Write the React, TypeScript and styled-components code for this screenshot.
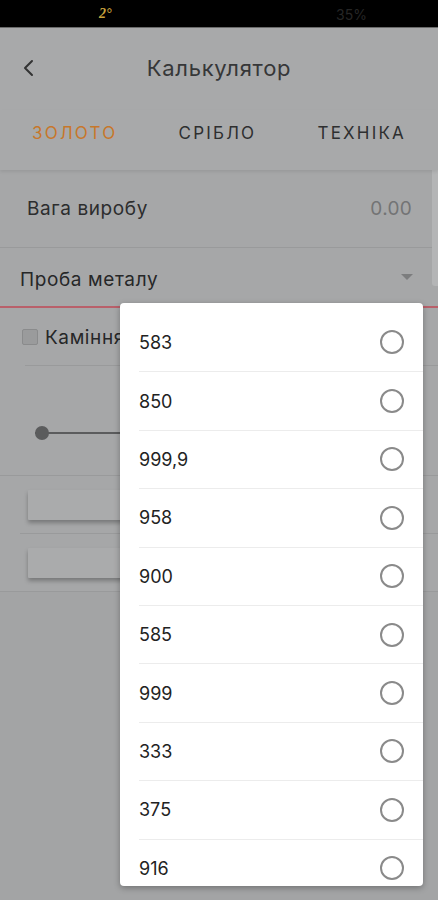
import styled, { createGlobalStyle } from 'styled-components';

const GlobalStyle = createGlobalStyle`
  html, body {
    margin: 0;
    padding: 0;
    background: #a3a4a5;
  }
  * {
    box-sizing: border-box;
  }
`;

const PROBES = ['583', '850', '999,9', '958', '900', '585', '999', '333', '375', '916'];

const App = () => {
  return (
    <>
      <GlobalStyle />
      <Screen>
        <StatusBar>
          <span className="temp">2°</span>
          <span className="battery">35%</span>
        </StatusBar>

        <Header>
          <BackButton>
            <svg width="14" height="20" viewBox="0 0 14 20">
              <path d="M10 3 L3 10 L10 17" fill="none" stroke="#333" strokeWidth="2" strokeLinecap="round" strokeLinejoin="round" />
            </svg>
          </BackButton>
          <Title>Калькулятор</Title>
        </Header>

        <Tabs>
          <Tab $active>ЗОЛОТО</Tab>
          <Tab>СРІБЛО</Tab>
          <Tab>ТЕХНІКА</Tab>
        </Tabs>

        <Content>
          <WeightRow>
            <span className="label">Вага виробу</span>
            <span className="value">0.00</span>
          </WeightRow>

          <ProbeRow>
            <span>Проба металу</span>
            <Caret />
          </ProbeRow>

          <CheckRow>
            <CheckBox />
            <span>Каміння</span>
          </CheckRow>

          <SliderRow>
            <SliderTrack>
              <SliderDot />
            </SliderTrack>
          </SliderRow>

          <ButtonRow $inset={20}>
            <FlatButton />
          </ButtonRow>
          <ButtonRow $inset={0}>
            <FlatButton />
          </ButtonRow>
        </Content>

        <ScrollThumb />

        <Dropdown>
          {PROBES.map((probe, i) => (
            <Option key={probe} $first={i === 0}>
              <span>{probe}</span>
              <Radio />
            </Option>
          ))}
        </Dropdown>
      </Screen>
    </>
  );
};

export default App;

const Screen = styled.div`
  position: relative;
  width: 438px;
  height: 900px;
  overflow: hidden;
  background: #a3a4a5;
  font-family: Inter, 'Noto Sans', sans-serif;
`;

const StatusBar = styled.div`
  height: 28px;
  background: #000;
  border-bottom: 1px solid #6a6a6a;
  position: relative;
  font-size: 14px;
  font-weight: bold;

  .temp {
    position: absolute;
    left: 99px;
    top: 6px;
    color: #c8a23c;
    font-family: 'Liberation Serif', serif;
    font-style: italic;
  }
  .battery {
    position: absolute;
    left: 336px;
    top: 6px;
    color: #262626;
    font-weight: normal;
  }
`;

const Header = styled.div`
  height: 82px;
  background: #a8a9aa;
  display: flex;
  align-items: center;
  justify-content: center;
  position: relative;
`;

const BackButton = styled.div`
  position: absolute;
  left: 22px;
  top: 30px;
  width: 20px;
  height: 20px;
  display: flex;
  align-items: center;
`;

const Title = styled.span`
  font-size: 22px;
  letter-spacing: 0.7px;
  color: #363738;
  margin-top: -2px;
`;

const Tabs = styled.div`
  height: 60px;
  background: #a8a9aa;
  display: flex;
  align-items: center;
  justify-content: space-between;
  padding: 0 32px 14px 32px;
  box-shadow: 0 2px 3px rgba(0, 0, 0, 0.08);
  position: relative;
  z-index: 1;
`;

const Tab = styled.span<{ $active?: boolean }>`
  font-size: 17px;
  letter-spacing: 2.2px;
  color: ${({ $active }) => ($active ? '#c7772a' : '#2e2f30')};
`;

const Content = styled.div`
  background: #a6a7a8;
  display: flex;
  flex-direction: column;
  font-size: 19px;
  letter-spacing: 0.6px;
`;

const WeightRow = styled.div`
  height: 78px;
  display: flex;
  align-items: center;
  justify-content: space-between;
  padding: 0 26px 0 27px;
  border-bottom: 1px solid #999a9b;

  .label {
    color: #2c2d2e;
  }
  .value {
    color: #737475;
    letter-spacing: 0.3px;
  }
`;

const ProbeRow = styled.div`
  height: 60px;
  display: flex;
  align-items: center;
  justify-content: space-between;
  padding: 4px 25px 0 20px;
  border-bottom: 2px solid #b9606a;
  color: #262728;
`;

const Caret = styled.span`
  width: 0;
  height: 0;
  border-left: 6px solid transparent;
  border-right: 6px solid transparent;
  border-top: 6px solid #7c7d7e;
  margin-top: -4px;
`;

const CheckRow = styled.div`
  height: 58px;
  display: flex;
  align-items: center;
  gap: 7px;
  padding-left: 22px;
  color: #262728;
  position: relative;

  &::after {
    content: '';
    position: absolute;
    left: 25px;
    right: 0;
    bottom: 0;
    height: 1px;
    background: #999a9b;
  }
`;

const CheckBox = styled.span`
  width: 16px;
  height: 16px;
  border-radius: 2px;
  background: #9a9b9c;
  border: 1px solid #8a8b8c;
`;

const SliderRow = styled.div`
  height: 110px;
  display: flex;
  align-items: flex-start;
  padding: 66px 30px 0 35px;
  border-bottom: 1px solid #999a9b;
`;

const SliderTrack = styled.div`
  flex: 1;
  height: 2px;
  background: #5b5c5d;
  position: relative;
`;

const SliderDot = styled.span`
  position: absolute;
  left: 0;
  top: -6px;
  width: 14px;
  height: 14px;
  border-radius: 50%;
  background: #5b5c5d;
`;

const ButtonRow = styled.div<{ $inset: number }>`
  height: 58px;
  display: flex;
  align-items: center;
  padding: 0 28px;
  position: relative;

  &::after {
    content: '';
    position: absolute;
    left: ${({ $inset }) => $inset}px;
    right: 0;
    bottom: 0;
    height: 1px;
    background: #999a9b;
  }
`;

const FlatButton = styled.div`
  flex: 1;
  height: 30px;
  background: #aaabac;
  box-shadow: 0 3px 4px rgba(0, 0, 0, 0.28);
  border-radius: 1px;
`;

const ScrollThumb = styled.div`
  position: absolute;
  right: 0;
  top: 118px;
  width: 6px;
  height: 168px;
  background: #b4b5b6;
  border-radius: 3px 0 0 3px;
`;

const Dropdown = styled.div`
  position: absolute;
  left: 120px;
  top: 303px;
  width: 303px;
  height: 583px;
  background: #fff;
  border-radius: 4px;
  box-shadow: 0 2px 6px rgba(0, 0, 0, 0.3);
  overflow: hidden;
  padding-top: 10px;
`;

const Option = styled.div<{ $first?: boolean }>`
  height: 58.4px;
  margin-left: 19px;
  padding-right: 19px;
  display: flex;
  align-items: center;
  justify-content: space-between;
  border-top: ${({ $first }) => ($first ? 'none' : '1.5px solid #ececec')};
  font-size: 18px;
  color: #222;
`;

const Radio = styled.span`
  width: 24px;
  height: 24px;
  border-radius: 50%;
  border: 2px solid #8a8a8a;
`;
